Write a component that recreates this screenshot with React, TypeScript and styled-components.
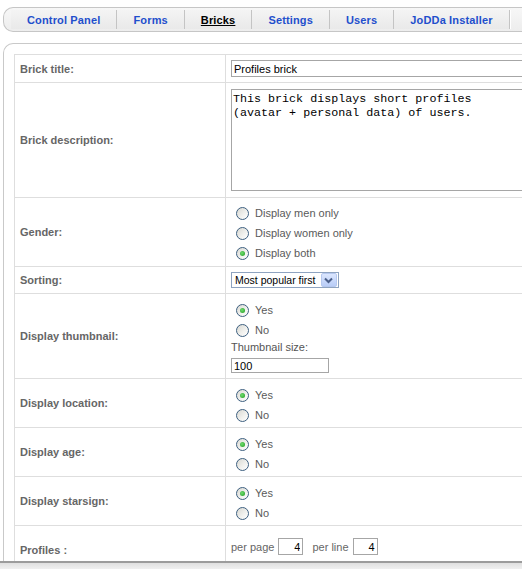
import React from "react";
import styled, { createGlobalStyle } from "styled-components";

const Global = createGlobalStyle`
  html, body { margin: 0; padding: 0; background: #fff; overflow: hidden; }
  body { font-family: "Liberation Sans", Arial, sans-serif; }
  * { box-sizing: border-box; }
`;

const Viewport = styled.div`
  width: 720px;
  height: 561px;
  overflow: hidden;
  padding: 7px 0 0 3px;
`;

const TabBar = styled.div`
  display: flex;
  height: 25px;
  padding-left: 7px;
  border: 1px solid #c6c6c6;
  border-right: none;
  border-radius: 10px 0 0 10px;
  background: linear-gradient(#f7f7f7, #ededed);
`;

const Tab = styled.a<{ $active?: boolean }>`
  display: flex;
  align-items: center;
  height: 19px;
  margin-top: 2px;
  padding: 0 16px;
  border-right: 1px solid #c4c4c4;
  box-shadow: 1px 0 0 #fff;
  background: linear-gradient(#f4f4f4, #e9e9e9);
  font: bold 11px "Liberation Sans", Arial, sans-serif;
  letter-spacing: 0.15px;
  color: ${(p) => (p.$active ? "#000" : "#1f4fcc")};
  text-decoration: ${(p) => (p.$active ? "underline" : "none")};
  white-space: nowrap;
  cursor: pointer;
`;

const Panel = styled.div`
  margin-top: 11px;
  padding: 10px 0 0 10px;
  border: 1px solid #c9c9c9;
  border-right: none;
  border-radius: 10px 0 0 0;
`;

const FormTable = styled.div`
  border-top: 1px solid #dedede;
  border-left: 1px solid #dedede;
`;

const Row = styled.div<{ $min?: number }>`
  display: grid;
  grid-template-columns: 211px 1fr;
  border-bottom: 1px solid #dedede;
  min-height: ${(p) => (p.$min ? `${p.$min}px` : "auto")};
`;

const LabelCell = styled.div`
  display: flex;
  align-items: center;
  padding-left: 5px;
  border-right: 1px solid #dedede;
  font: bold 11px "Liberation Sans", Arial, sans-serif;
  color: #666;
`;

const ValueCell = styled.div<{ $pt: number; $pb: number; $center?: boolean }>`
  display: flex;
  flex-direction: ${(p) => (p.$center ? "row" : "column")};
  align-items: ${(p) => (p.$center ? "center" : "flex-start")};
  padding: ${(p) => `${p.$pt}px 0 ${p.$pb}px 5px`};
  font: 11px "Liberation Sans", Arial, sans-serif;
  color: #555;
`;

const TextInput = styled.input<{ $w: number; $h: number; $right?: boolean }>`
  width: ${(p) => p.$w}px;
  height: ${(p) => p.$h}px;
  margin: 0;
  padding: 0 2px;
  border: 1px solid #a6a6a6;
  background: #fff;
  font: 11px "Liberation Sans", Arial, sans-serif;
  color: #000;
  text-align: ${(p) => (p.$right ? "right" : "left")};
  outline: none;
`;

const TextArea = styled.textarea`
  width: 320px;
  height: 102px;
  margin: 0;
  padding: 2px 1px;
  border: 1px solid #a6a6a6;
  resize: none;
  font: 11.7px "Liberation Mono", "Courier New", monospace;
  line-height: 14px;
  color: #000;
  outline: none;
  overflow: hidden;
`;

const RadioLine = styled.label`
  display: flex;
  align-items: center;
  height: 20px;
  color: #5a5a5a;
`;

const RadioDot = styled.span<{ $checked?: boolean }>`
  position: relative;
  flex: none;
  width: 13px;
  height: 13px;
  margin: 0 6px 0 5px;
  border-radius: 50%;
  border: 1px solid #3d5f80;
  background: linear-gradient(135deg, #d8d8d2 0%, #f2f2ef 60%, #ffffff 100%);
  &::after {
    content: "";
    display: ${(p) => (p.$checked ? "block" : "none")};
    position: absolute;
    left: 3px;
    top: 3px;
    width: 5px;
    height: 5px;
    border-radius: 50%;
    background: radial-gradient(circle at 40% 40%, #6fdc6f, #1f9a1f);
  }
`;

const SmallLabel = styled.div`
  height: 15px;
  line-height: 15px;
  margin-bottom: 3px;
  color: #555;
`;

const SelectBox = styled.div`
  display: flex;
  align-items: center;
  gap: 5px;
  height: 16px;
  padding: 0 1px 0 3px;
  border: 1px solid #8ea3c0;
  background: #fff;
  color: #000;
  font: 10.5px "Liberation Sans", Arial, sans-serif;
`;

const SelectText = styled.span`
  white-space: nowrap;
`;

const DropButton = styled.span`
  display: flex;
  align-items: center;
  justify-content: center;
  width: 16px;
  height: 14px;
  border: 1px solid #b6c8ef;
  border-radius: 2px;
  background: linear-gradient(#dbe6fe, #b9cdf8);
`;

const InlineText = styled.span<{ $ml?: number }>`
  margin: 0 4px 0 ${(p) => p.$ml ?? 0}px;
  color: #666;
`;

const BottomStrip = styled.div`
  height: 8px;
  border-top: 2px solid #9c9c9c;
  background: linear-gradient(#e0e0e0, #f0f0f0);
`;

function Radio({ label, checked }: { label: string; checked?: boolean }) {
  return (
    <RadioLine>
      <RadioDot $checked={checked} />
      {label}
    </RadioLine>
  );
}

function YesNo() {
  return (
    <>
      <Radio label="Yes" checked />
      <Radio label="No" />
    </>
  );
}

const tabs = ["Control Panel", "Forms", "Bricks", "Settings", "Users", "JoDDa Installer"];

export default function App() {
  return (
    <>
      <Global />
      <Viewport>
        <TabBar>
          {tabs.map((t) => (
            <Tab key={t} $active={t === "Bricks"}>
              {t}
            </Tab>
          ))}
        </TabBar>
        <Panel>
          <FormTable>
            <Row>
              <LabelCell>Brick title:</LabelCell>
              <ValueCell $pt={5} $pb={5}>
                <TextInput $w={320} $h={17} readOnly defaultValue="Profiles brick" />
              </ValueCell>
            </Row>
            <Row>
              <LabelCell>Brick description:</LabelCell>
              <ValueCell $pt={6} $pb={6}>
                <TextArea
                  readOnly
                  defaultValue={"This brick displays short profiles\n(avatar + personal data) of users."}
                />
              </ValueCell>
            </Row>
            <Row>
              <LabelCell>Gender:</LabelCell>
              <ValueCell $pt={5} $pb={3}>
                <Radio label="Display men only" />
                <Radio label="Display women only" />
                <Radio label="Display both" checked />
              </ValueCell>
            </Row>
            <Row>
              <LabelCell>Sorting:</LabelCell>
              <ValueCell $pt={5} $pb={5}>
                <SelectBox>
                  <SelectText>Most popular first</SelectText>
                  <DropButton>
                    <svg width="9" height="7" viewBox="0 0 9 7">
                      <path d="M1 1.5 L4.5 5 L8 1.5" fill="none" stroke="#4b5f8a" strokeWidth="2" />
                    </svg>
                  </DropButton>
                </SelectBox>
              </ValueCell>
            </Row>
            <Row>
              <LabelCell>Display thumbnail:</LabelCell>
              <ValueCell $pt={6} $pb={5}>
                <YesNo />
                <SmallLabel>Thumbnail size:</SmallLabel>
                <TextInput $w={98} $h={15} readOnly defaultValue="100" />
              </ValueCell>
            </Row>
            <Row>
              <LabelCell>Display location:</LabelCell>
              <ValueCell $pt={6} $pb={2}>
                <YesNo />
              </ValueCell>
            </Row>
            <Row>
              <LabelCell>Display age:</LabelCell>
              <ValueCell $pt={6} $pb={2}>
                <YesNo />
              </ValueCell>
            </Row>
            <Row>
              <LabelCell>Display starsign:</LabelCell>
              <ValueCell $pt={6} $pb={2}>
                <YesNo />
              </ValueCell>
            </Row>
            <Row $min={48}>
              <LabelCell>Profiles :</LabelCell>
              <ValueCell $pt={0} $pb={6} $center>
                <InlineText>per page</InlineText>
                <TextInput $w={25} $h={17} $right readOnly defaultValue="4" />
                <InlineText $ml={9}>per line</InlineText>
                <TextInput $w={25} $h={17} $right readOnly defaultValue="4" />
              </ValueCell>
            </Row>
          </FormTable>
        </Panel>
      </Viewport>
      <BottomStrip />
    </>
  );
}
